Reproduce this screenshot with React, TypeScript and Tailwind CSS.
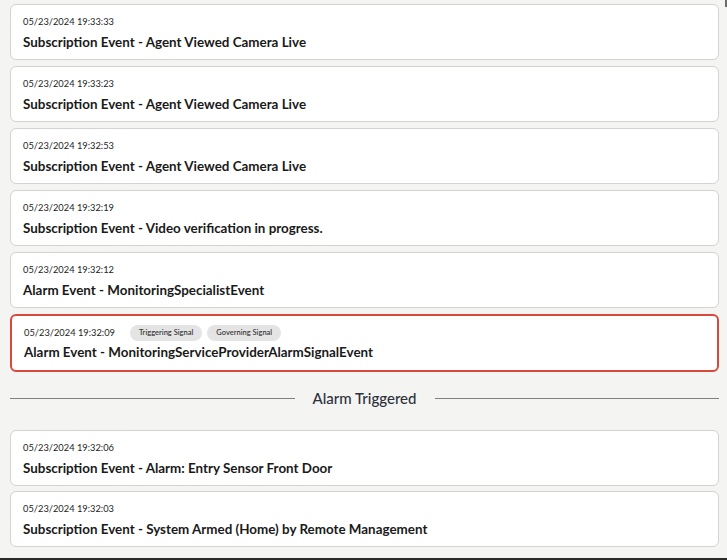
import React from "react";

type EventItem = {
  time: string;
  title: string;
  signals?: string[];
  alarm?: boolean;
};

const before: EventItem[] = [
  { time: "05/23/2024 19:33:33", title: "Subscription Event - Agent Viewed Camera Live" },
  { time: "05/23/2024 19:33:23", title: "Subscription Event - Agent Viewed Camera Live" },
  { time: "05/23/2024 19:32:53", title: "Subscription Event - Agent Viewed Camera Live" },
  { time: "05/23/2024 19:32:19", title: "Subscription Event - Video verification in progress." },
  { time: "05/23/2024 19:32:12", title: "Alarm Event - MonitoringSpecialistEvent" },
  {
    time: "05/23/2024 19:32:09",
    title: "Alarm Event - MonitoringServiceProviderAlarmSignalEvent",
    signals: ["Triggering Signal", "Governing Signal"],
    alarm: true,
  },
];

const after: EventItem[] = [
  { time: "05/23/2024 19:32:06", title: "Subscription Event - Alarm: Entry Sensor Front Door" },
  { time: "05/23/2024 19:32:03", title: "Subscription Event - System Armed (Home) by Remote Management" },
];

const EventCard = ({ item }: { item: EventItem }) => {
  if (item.alarm) {
    return (
      <div className="bg-white rounded-[6px] border-2 border-[#d9483b] px-[12px] pt-[9px] pb-[9px]">
        <div className="flex items-center h-[16px]">
          <span className="text-[9.3px] leading-[14px] text-[#1c1c1c]">{item.time}</span>
          <div className="flex items-center gap-[5px] ml-[15px]">
            {item.signals?.map((s) => (
              <span
                key={s}
                className="h-[16px] px-[9px] rounded-full bg-[#e4e4e4] text-[7.5px] leading-[16px] font-semibold text-[#3a3a3a]"
              >
                {s}
              </span>
            ))}
          </div>
        </div>
        <p className="mt-[2px] text-[13.4px] leading-[18px] font-bold text-[#1a1a1a]">{item.title}</p>
      </div>
    );
  }

  return (
    <div className="bg-white rounded-[6px] border border-[#d5d2cf] px-[12px] pt-[10px] pb-[8px]">
      <p className="text-[9.3px] leading-[14px] text-[#1c1c1c]">{item.time}</p>
      <p className="mt-[4px] text-[13.4px] leading-[18px] font-bold text-[#1a1a1a]">{item.title}</p>
    </div>
  );
};

export default function App() {
  return (
    <div className="relative h-[560px] overflow-hidden bg-[#f4f4f2] font-['Lato',sans-serif]">
      <div className="px-[10px] pt-[4px] pr-[8px]">
        <div className="flex flex-col gap-[6px]">
          {before.map((item, i) => (
            <EventCard key={i} item={item} />
          ))}
        </div>

        {/* Alarm Triggered divider */}
        <div className="flex items-center gap-[18px] mt-[16px] h-[20px]">
          <div className="flex-1 h-[1px] bg-[#808080]" />
          <span className="text-[15px] leading-[20px] font-medium text-[#2c313b]">Alarm Triggered</span>
          <div className="flex-1 h-[1px] bg-[#808080]" />
        </div>

        <div className="flex flex-col gap-[5px] mt-[22px]">
          {after.map((item, i) => (
            <EventCard key={i} item={item} />
          ))}
        </div>
      </div>

      {/* scrollbar thumb + bottom bar */}
      <div className="absolute top-0 right-0 w-[2px] h-[7px] bg-[#6b6b6b]" />
      <div className="absolute bottom-0 left-0 right-0 h-[2px] bg-[#2a2a2a]" />
    </div>
  );
}
